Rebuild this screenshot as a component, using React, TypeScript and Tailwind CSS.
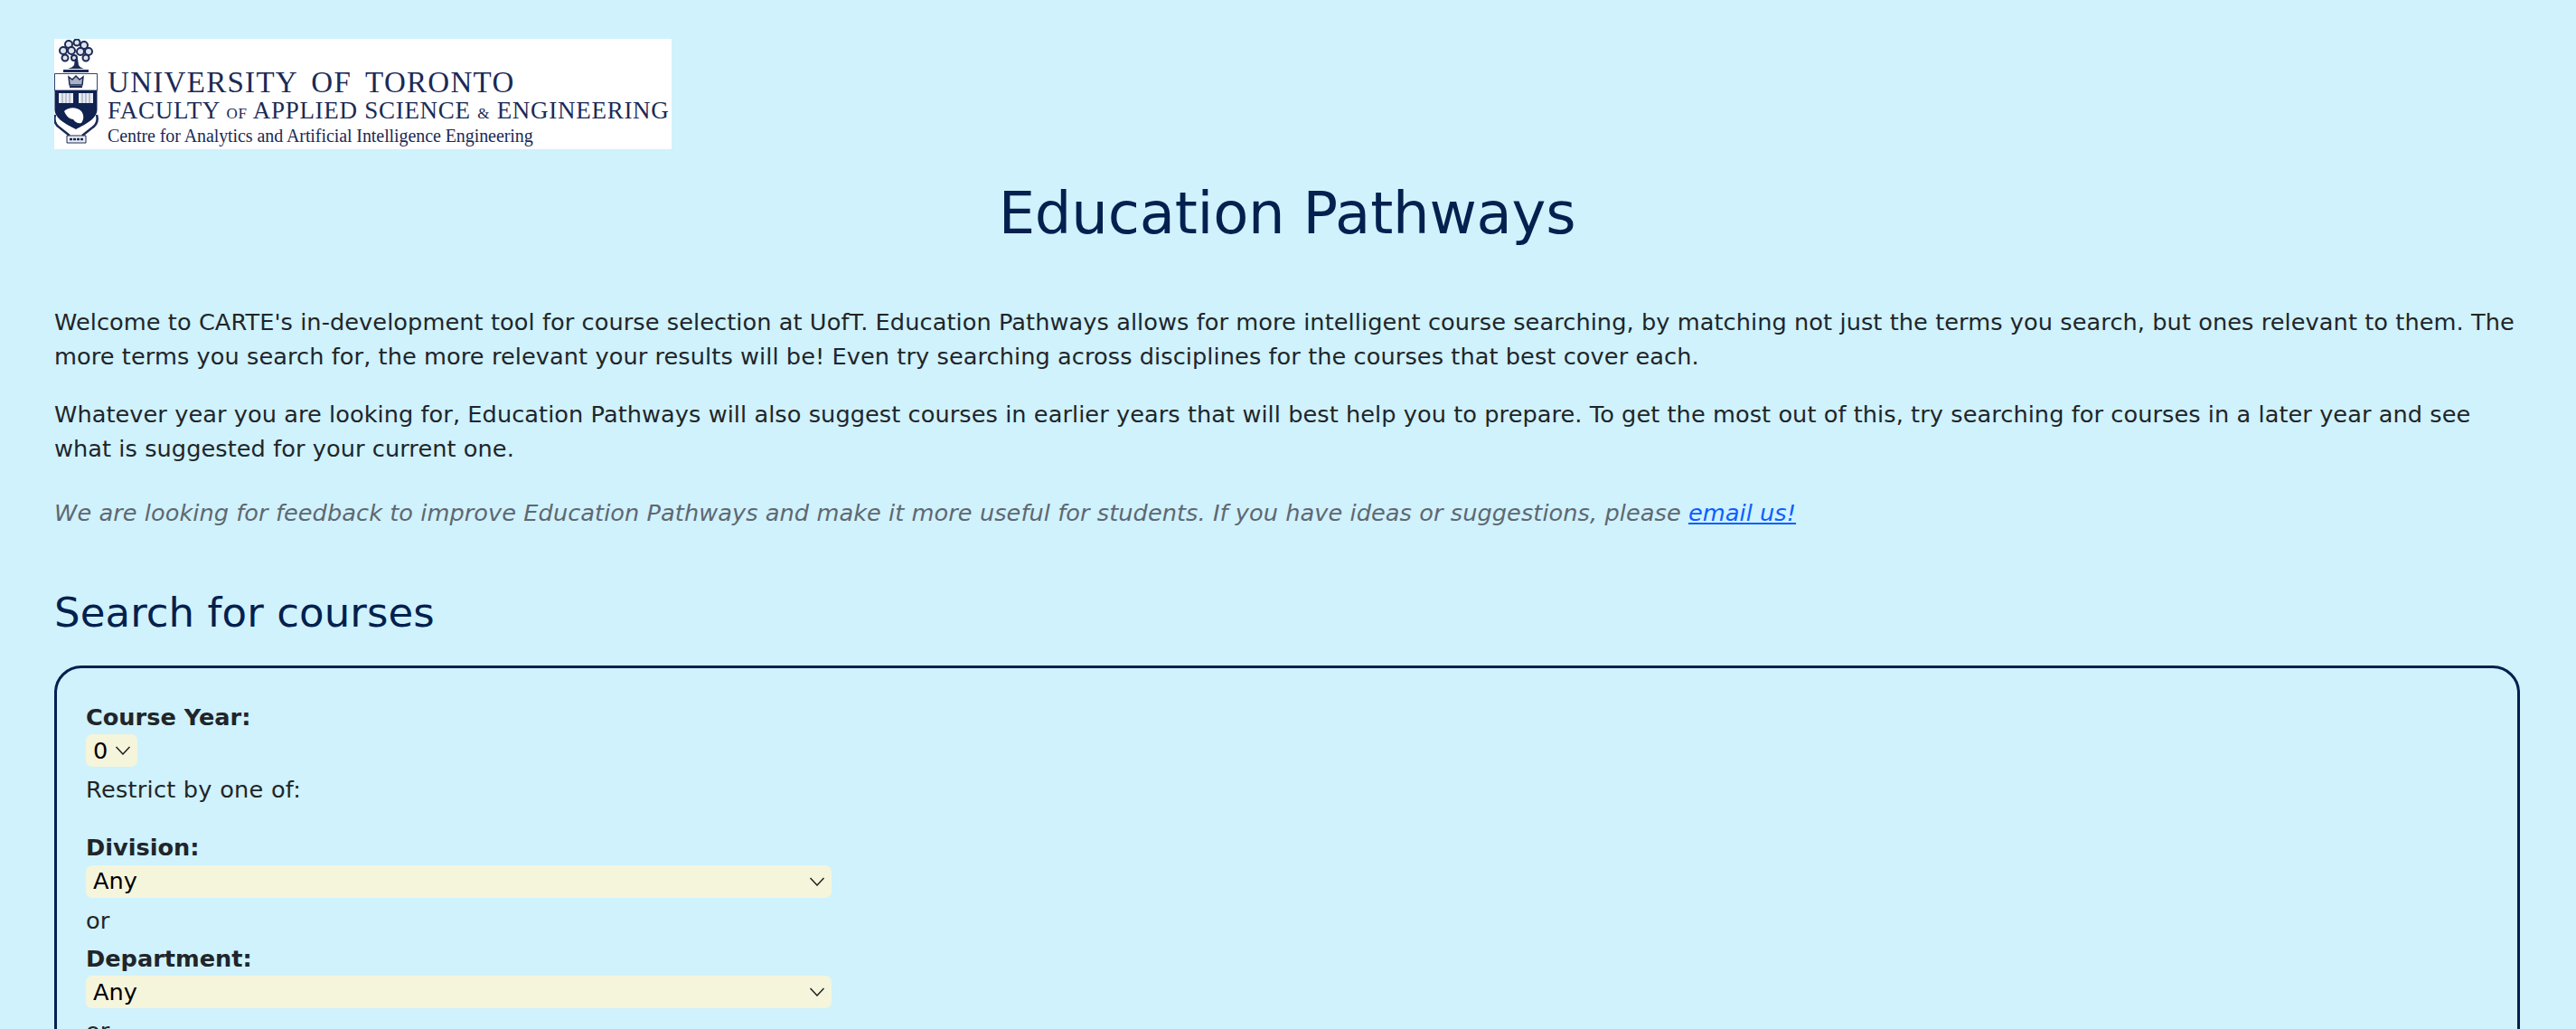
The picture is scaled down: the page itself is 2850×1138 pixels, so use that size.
const Crest = () => (
  <svg viewBox="0 0 50 122" className="w-[50px] h-[122px] shrink-0">
    {/* tree */}
    <g fill="#dfe3ec" stroke="#1b2a55" strokeWidth="2">
      <circle cx="16" cy="6" r="4" />
      <circle cx="25" cy="4" r="3.500" />
      <circle cx="33" cy="7" r="4" />
      <circle cx="10" cy="13" r="4" />
      <circle cx="19" cy="13" r="4" />
      <circle cx="29" cy="14" r="4" />
      <circle cx="38" cy="14" r="4" />
      <circle cx="12" cy="21" r="3.500" />
      <circle cx="35" cy="21" r="3.500" />
      <circle cx="22" cy="21" r="3" />
    </g>
    <path d="M23 22h3l1 7c1 2 3 3 6 4H15c3-1 6-2 7-4z" fill="#1b2a55" />
    <path d="M10 34h28v3H10z" fill="#1b2a55" />
    {/* shield */}
    <path d="M0.500 38.500h47V78c0 10-12 16-23.500 22C12.500 94 0.500 88 0.500 78z" fill="#0f2250" />
    <path d="M0.500 38.500h47V57H0.500z" fill="#ffffff" stroke="#0f2250" strokeWidth="0.8" />
    <path d="M16 42l4 3 4-4 4 4 4-3-1 9H17z" fill="#aab2c6" stroke="#1b2a55" strokeWidth="1.500" />
    <path d="M17 53h14" stroke="#1b2a55" strokeWidth="2" />
    {/* books */}
    <path d="M5 60h16v11H5zM27 60h16v11H27z" fill="#e8ecf2" />
    <path d="M9 60v11M13 60v11M17 60v11M31 60v11M35 60v11M39 60v11" stroke="#8f9ab3" strokeWidth="1" />
    {/* beaver */}
    <path d="M11 80c5-5 14-5 19 0 3 4 3 9 0 13-4 1-7-1-9-4-4 0-8-4-10-9z" fill="#ffffff" />
    {/* motto scroll */}
    <path d="M1 84c-2 7 1 12 6 15l10 8M47 84c2 7-1 12-6 15l-10 8" fill="none" stroke="#1b2a55" strokeWidth="2.500" />
    <path d="M14 107h21v8H14z" fill="#eef0f4" stroke="#1b2a55" strokeWidth="1" />
    <path d="M17 111h15" stroke="#1b2a55" strokeWidth="2.500" strokeDasharray="3 1" />
  </svg>
);

const Logo = () => (
  <div className="flex w-[683px] h-[122px] bg-white overflow-hidden font-['Liberation_Serif',serif] text-[#1b2a55]">
    <Crest />
    <div className="pl-[9px] flex flex-col whitespace-nowrap">
      <div className="mt-[34px] text-[33px] leading-[28px] tracking-[1.3px] [word-spacing:6px]">
        UNIVERSITY OF TORONTO
      </div>
      <div className="mt-[3px] text-[27px] leading-[28px] tracking-[0.72px]">
        FACULTY <span className="text-[17px]">OF</span> APPLIED SCIENCE <span className="text-[17px]">&amp;</span> ENGINEERING
      </div>
      <div className="mt-[-2px] text-[20px] leading-[24px] tracking-[-0.08px]">
        Centre for Analytics and Artificial Intelligence Engineering
      </div>
    </div>
  </div>
);

const Chevron = () => (
  <svg viewBox="0 0 18 10" className="w-[18px] h-[10px]" fill="none" stroke="#222" strokeWidth="1.500">
    <path d="M1.500 1l7.500 8 7.500-8" />
  </svg>
);

const FakeSelect = ({ value, wide }: { value: string; wide?: boolean }) => (
  <div
    className={
      "flex items-center justify-between h-[36px] rounded-[7px] bg-[#f5f5dc] pl-[8px] pr-[7px] text-black " +
      (wide ? "w-[825px]" : "w-[57px]")
    }
  >
    <span>{value}</span>
    <Chevron />
  </div>
);

export default function App() {
  return (
    <div className="h-screen overflow-hidden bg-[#cff2fd] pl-[60px] pr-[62px] pt-[43px] font-['DejaVu_Sans',sans-serif] text-[25.6px] leading-[38.4px] text-[#212529]">
      <Logo />

      <h1 className="mt-[33px] text-center text-[64px] leading-[77px] tracking-[-0.2px] text-[#03204f]">Education Pathways</h1>

      <p className="mt-[61.600px] tracking-[0.08px]">
        Welcome to CARTE's in-development tool for course selection at UofT. Education Pathways allows for more
        intelligent course searching, by matching not just the terms you search, but ones relevant to them. The more
        terms you search for, the more relevant your results will be! Even try searching across disciplines for the
        courses that best cover each.
      </p>
      <p className="mt-[25.600px] tracking-[0.07px]">
        Whatever year you are looking for, Education Pathways will also suggest courses in earlier years that will
        best help you to prepare. To get the most out of this, try searching for courses in a later year and see what
        is suggested for your current one.
      </p>

      <p className="mt-[32px] italic tracking-[0.07px] text-[#5f6770]">
        We are looking for feedback to improve Education Pathways and make it more useful for students. If you have
        ideas or suggestions, please <a href="#" className="text-[#0d5eff] underline">email us!</a>
      </p>

      <h2 className="mt-[65px] text-[45px] leading-[54px] tracking-[0.1px] text-[#03204f]">Search for courses</h2>

      <div className="mt-[30.600px] h-[900px] rounded-[30px] border-[3px] border-[#03204f] px-[32px] pt-[35px]">
        <div className="font-bold">Course Year:</div>
        <FakeSelect value="0" />
        <div className="mt-[6px] tracking-[0.25px]">Restrict by one of:</div>

        <div className="mt-[25.600px] font-bold">Division:</div>
        <FakeSelect value="Any" wide />
        <div className="mt-[6px]">or</div>
        <div className="mt-[4px] font-bold">Department:</div>
        <FakeSelect value="Any" wide />
        <div className="mt-[6px]">or</div>
      </div>
    </div>
  );
}
